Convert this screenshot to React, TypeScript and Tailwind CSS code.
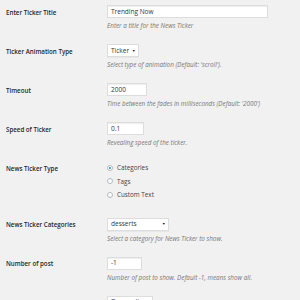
import React from "react";

const font = { fontFamily: '"Open Sans", "Liberation Sans", sans-serif' };

function Row({ label, children, className = "" }: { label: string; children: React.ReactNode; className?: string }) {
  return (
    <div className={`flex ${className}`}>
      <div className="w-[101px] shrink-0 pt-[0.5px] text-[6.2px] font-semibold leading-[13px] text-[#23282d]">{label}</div>
      <div className="flex flex-col">{children}</div>
    </div>
  );
}

function TextInput({ value, w }: { value: string; w: string }) {
  return (
    <div
      className={`${w} flex h-[13px] items-center border border-[#ddd] bg-white pl-[3px] text-[6.5px] text-[#32373c] shadow-[inset_0_1px_1px_rgba(0,0,0,0.07)]`}
    >
      {value}
    </div>
  );
}

function Select({ value, w }: { value: string; w: string }) {
  return (
    <div
      className={`${w} flex h-[13px] items-center justify-between whitespace-nowrap border border-[#ddd] bg-white pl-[3px] pr-[2.5px] text-[6.5px] text-[#32373c] shadow-[0_1px_0_rgba(0,0,0,0.04)]`}
    >
      <span>{value}</span>
      <span className="ml-[2px] text-[3.5px] text-[#111]">▼</span>
    </div>
  );
}

function Hint({ children }: { children: React.ReactNode }) {
  return <p className="mt-[3px] text-[6.3px] italic leading-[9px] text-[#777]">{children}</p>;
}

function Radio({ label, checked }: { label: string; checked?: boolean }) {
  return (
    <div className="flex h-[13.5px] items-center gap-[4px] text-[6.3px] text-[#444]">
      <span className="flex h-[6px] w-[6px] items-center justify-center rounded-full border border-[#b4b9be] bg-white">
        {checked && <span className="h-[2.5px] w-[2.5px] rounded-full bg-[#1e8cbe]" />}
      </span>
      {label}
    </div>
  );
}

export default function App() {
  return (
    <div className="h-[300px] w-[300px] overflow-hidden bg-[#f1f1f1] pl-[6px] pt-[5px]" style={font}>
      <Row label="Enter Ticker Title" className="mb-[14px]">
        <TextInput value="Trending Now" w="w-[161px]" />
        <Hint>Enter a title for the News Ticker</Hint>
      </Row>
      <Row label="Ticker Animation Type" className="mb-[14px]">
        <Select value="Ticker" w="w-[32px]" />
        <Hint>Select type of animation (Default: 'scroll').</Hint>
      </Row>
      <Row label="Timeout" className="mb-[14px]">
        <TextInput value="2000" w="w-[40px]" />
        <Hint>Time between the fades in milliseconds (Default: '2000')</Hint>
      </Row>
      <Row label="Speed of Ticker" className="mb-[14px]">
        <TextInput value="0.1" w="w-[37px]" />
        <Hint>Revealing speed of the ticker.</Hint>
      </Row>
      <Row label="News Ticker Type" className="mb-[16px]">
        <Radio label="Categories" checked />
        <Radio label="Tags" />
        <Radio label="Custom Text" />
      </Row>
      <Row label="News Ticker Categories" className="mb-[14px]">
        <Select value="desserts" w="w-[62px]" />
        <Hint>Select a category for News Ticker to show.</Hint>
      </Row>
      <Row label="Number of post" className="mb-[14px]">
        <TextInput value="-1" w="w-[35px]" />
        <Hint>Number of post to show. Default -1, means show all.</Hint>
      </Row>
      <Row label="Select Post Order">
        <Select value="Descending" w="w-[46px]" />
      </Row>
    </div>
  );
}
